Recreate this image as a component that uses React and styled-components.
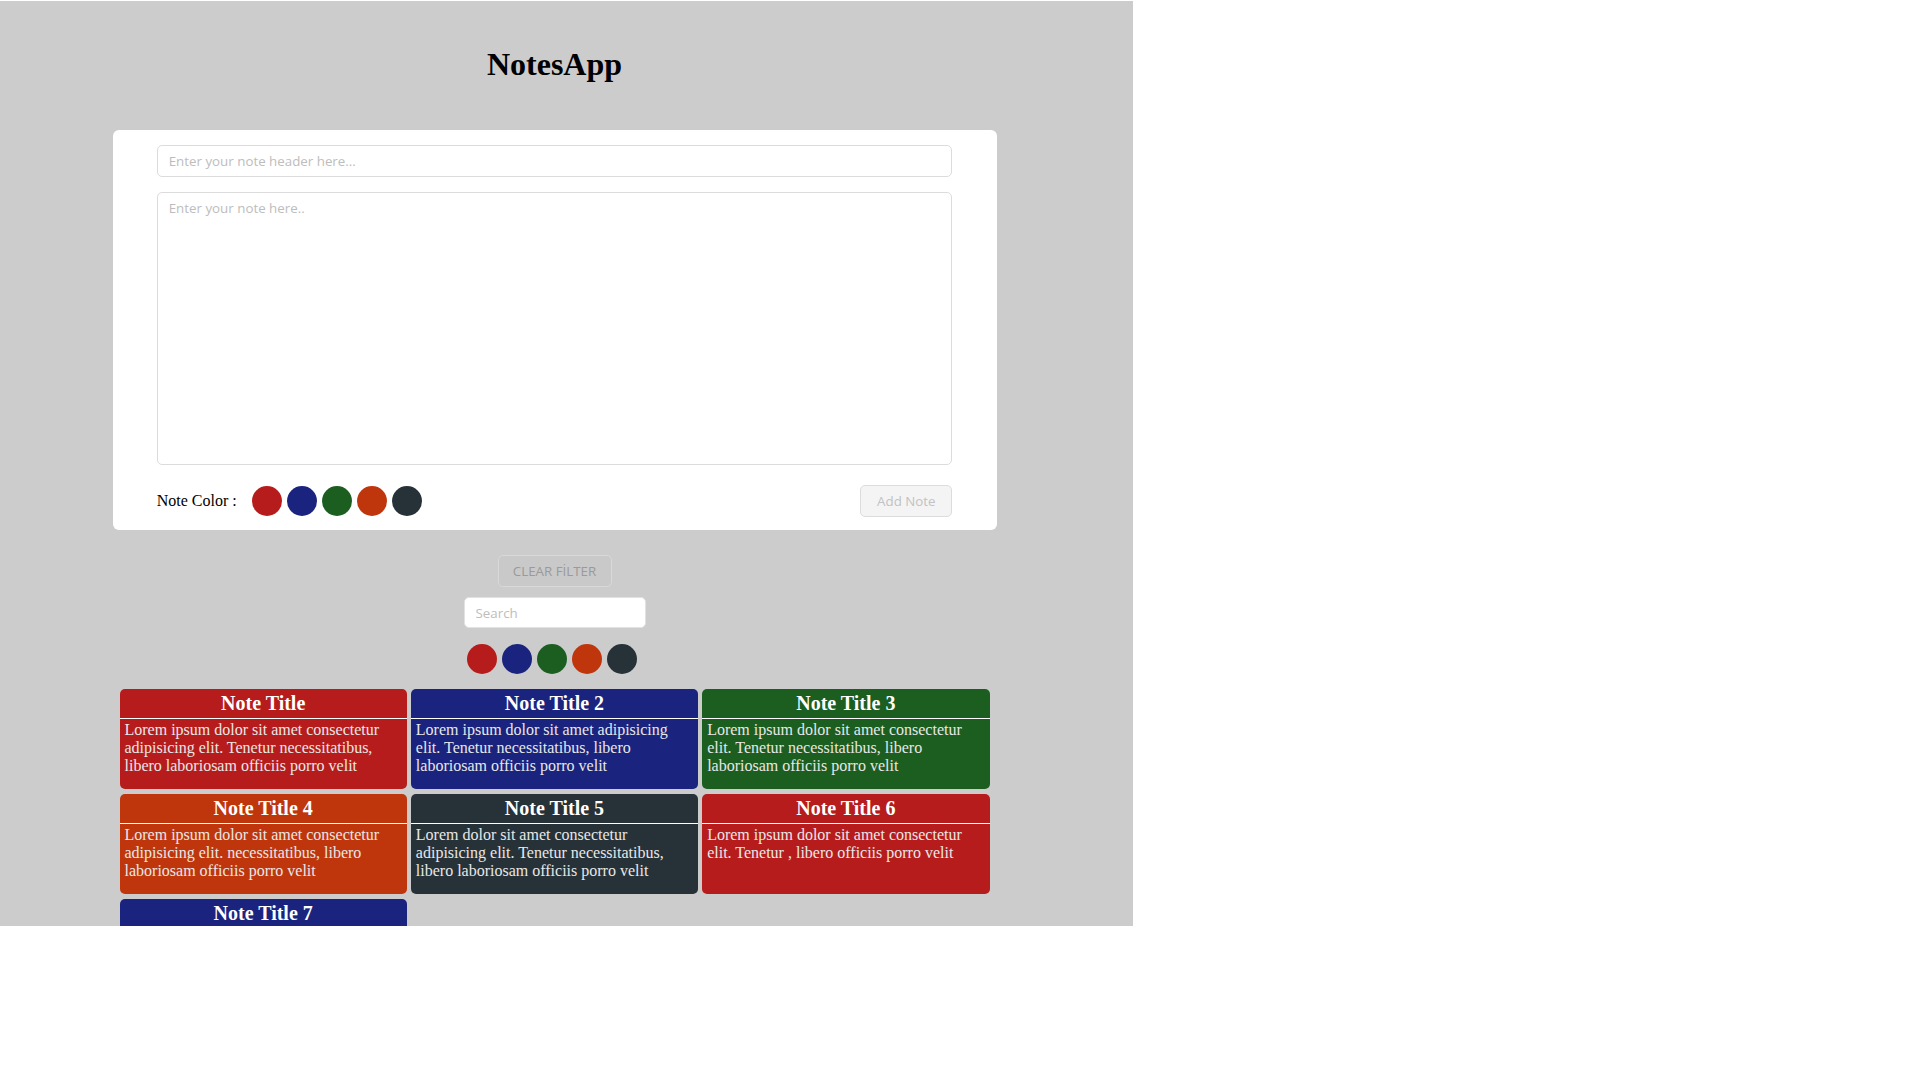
import React from "react";
import styled, { createGlobalStyle } from "styled-components";

const GlobalStyle = createGlobalStyle`
	body {
		margin: 0;
		background: #fff;
		font-family: "Liberation Serif", "Times New Roman", serif;
	}
	* {
		box-sizing: border-box;
	}
`;

const COLORS = ["#b71c1c", "#1a237e", "#1b5e20", "#bf360c", "#263238"];

const notes = [
	{ title: "Note Title", color: "#b71c1c", text: "Lorem ipsum dolor sit amet consectetur adipisicing elit. Tenetur necessitatibus, libero laboriosam officiis porro velit" },
	{ title: "Note Title 2", color: "#1a237e", text: "Lorem ipsum dolor sit amet adipisicing elit. Tenetur necessitatibus, libero laboriosam officiis porro velit" },
	{ title: "Note Title 3", color: "#1b5e20", text: "Lorem ipsum dolor sit amet consectetur elit. Tenetur necessitatibus, libero laboriosam officiis porro velit" },
	{ title: "Note Title 4", color: "#bf360c", text: "Lorem ipsum dolor sit amet consectetur adipisicing elit. necessitatibus, libero laboriosam officiis porro velit" },
	{ title: "Note Title 5", color: "#263238", text: "Lorem dolor sit amet consectetur adipisicing elit. Tenetur necessitatibus, libero laboriosam officiis porro velit" },
	{ title: "Note Title 6", color: "#b71c1c", text: "Lorem ipsum dolor sit amet consectetur elit. Tenetur , libero officiis porro velit" },
	{ title: "Note Title 7", color: "#1a237e", text: "Lorem ipsum dolor sit amet consectetur adipisicing elit. Tenetur necessitatibus, libero laboriosam officiis porro velit" },
];

const Page = styled.div`
	width: 1133px;
	height: 925px;
	margin-top: 1px;
	padding-right: 24px;
	background: #cccccc;
	overflow: hidden;
`;

const Column = styled.main`
	display: flex;
	flex-direction: column;
	align-items: center;
`;

const Title = styled.h1`
	margin: 45px 0 0;
	font-size: 32px;
	line-height: 37px;
	font-weight: 700;
	color: #000;
`;

const FormCard = styled.section`
	width: 884px;
	margin-top: 47px;
	padding: 15px 0 13px;
	background: #fff;
	border-radius: 6px;
	display: flex;
	flex-direction: column;
	align-items: center;
`;

const fieldFont = `
	font-family: "Open Sans", "Noto Sans", sans-serif;
	font-size: 13.333px;
	color: #333;
	&::placeholder {
		color: #bdbdbd;
	}
`;

const HeaderInput = styled.input`
	${fieldFont}
	width: 90%;
	height: 32px;
	padding: 0 11px;
	border: 1px solid #dcdcdc;
	border-radius: 5px;
	outline: none;
`;

const NoteArea = styled.textarea`
	${fieldFont}
	width: 90%;
	height: 273px;
	margin-top: 15px;
	padding: 6px 11px;
	border: 1px solid #dcdcdc;
	border-radius: 5px;
	resize: none;
	outline: none;
`;

const ControlRow = styled.div`
	width: 90%;
	margin-top: 20px;
	display: flex;
	align-items: center;
	justify-content: space-between;
`;

const Picker = styled.div`
	display: flex;
	align-items: center;
`;

const PickerLabel = styled.span`
	font-size: 16px;
	margin-right: 15px;
	color: #000;
`;

const Swatch = styled.span`
	display: block;
	width: 30px;
	height: 30px;
	margin-right: 5px;
	border-radius: 50%;
	background: ${(p) => p.color};
	cursor: pointer;
`;

const AddButton = styled.button`
	font-family: "Open Sans", "Noto Sans", sans-serif;
	font-size: 13.333px;
	width: 92px;
	height: 32px;
	background: #f4f4f4;
	color: #c2c2c2;
	border: 1px solid #dcdcdc;
	border-radius: 5px;
`;

const ClearButton = styled.button`
	font-family: "Open Sans", "Noto Sans", sans-serif;
	font-size: 13.333px;
	width: 114px;
	height: 32px;
	margin-top: 25px;
	background: #c9c9c9;
	color: #9a9a9a;
	border: 1px solid #d9d9d9;
	border-radius: 5px;
`;

const SearchInput = styled.input`
	${fieldFont}
	width: 182px;
	height: 31px;
	margin-top: 10px;
	padding: 0 11px;
	border: 1px solid #e2e2e2;
	border-radius: 5px;
	outline: none;
`;

const FilterRow = styled.div`
	margin-top: 16px;
	display: flex;
`;

const NotesGrid = styled.div`
	width: 870px;
	margin-top: 15px;
	display: grid;
	grid-template-columns: repeat(3, 1fr);
	column-gap: 4px;
	row-gap: 5px;
`;

const NoteCard = styled.article`
	min-height: 100px;
	background: ${(p) => p.color};
	border-radius: 5px;
	color: #fff;
`;

const NoteTitle = styled.h3`
	margin: 0;
	padding: 3px 0;
	text-align: center;
	font-size: 20px;
	line-height: 23px;
	font-weight: 700;
	border-bottom: 1px solid #fff;
`;

const NoteBody = styled.p`
	margin: 0;
	padding: 2px 5px 4px;
	font-size: 16px;
	line-height: normal;
	color: #e8e8e8;
`;

export default function App() {
	return (
		<>
			<GlobalStyle />
			<Page>
				<Column>
					<Title>NotesApp</Title>
					<FormCard>
						<HeaderInput placeholder="Enter your note header here..." />
						<NoteArea placeholder="Enter your note here.." />
						<ControlRow>
							<Picker>
								<PickerLabel>Note Color :</PickerLabel>
								{COLORS.map((c) => (
									<Swatch key={c} color={c} />
								))}
							</Picker>
							<AddButton>Add Note</AddButton>
						</ControlRow>
					</FormCard>
					<ClearButton>CLEAR FİLTER</ClearButton>
					<SearchInput placeholder="Search" />
					<FilterRow>
						{COLORS.map((c) => (
							<Swatch key={c} color={c} />
						))}
					</FilterRow>
					<NotesGrid>
						{notes.map((n, i) => (
							<NoteCard key={i} color={n.color}>
								<NoteTitle>{n.title}</NoteTitle>
								<NoteBody>{n.text}</NoteBody>
							</NoteCard>
						))}
					</NotesGrid>
				</Column>
			</Page>
		</>
	);
}
